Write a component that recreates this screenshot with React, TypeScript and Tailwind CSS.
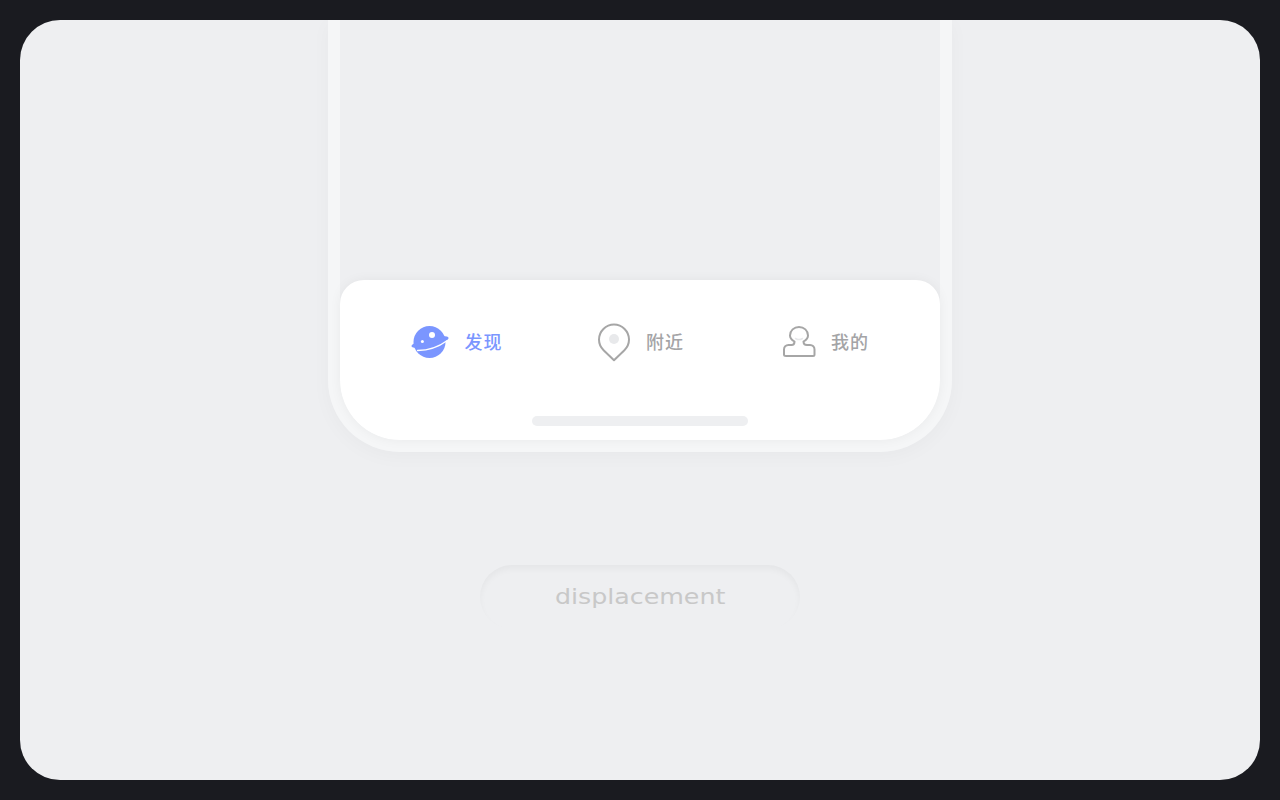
function PlanetIcon() {
  return (
    <svg width="40" height="40" viewBox="0 0 40 40" aria-hidden>
      <circle cx="19.500" cy="20" r="16" fill="#7b96ff" />
      <ellipse cx="20" cy="20" rx="19" ry="4.200" transform="rotate(-13 20 20)" fill="#7b96ff" />
      <path d="M7.500 28.500C17 28.300 28 25.500 36.500 19" fill="none" stroke="#fff" strokeWidth="1.300" strokeLinecap="round" />
      <circle cx="22" cy="13" r="3" fill="#fff" />
      <circle cx="12.400" cy="19.400" r="1.500" fill="#fff" />
    </svg>
  )
}

function PinIcon() {
  return (
    <svg width="36" height="42" viewBox="0 0 36 42" aria-hidden>
      <path
        d="M18 39.200 7.600 29.200C4.600 26.400 3 22.800 3 18.600 3 10.400 9.800 3.600 18 3.600s15 6.800 15 15c0 4.200-1.600 7.800-4.600 10.600z"
        fill="none"
        stroke="#a6a6a6"
        strokeWidth="2"
        strokeLinejoin="round"
      />
      <circle cx="18" cy="18" r="5" fill="#e8e9eb" />
    </svg>
  )
}

function PersonIcon() {
  return (
    <svg width="36" height="36" viewBox="0 0 36 36" aria-hidden>
      <path
        d="M13.500 17.500C10.800 16 9 14 9 11.500 9 6.500 13 3 18 3s9 3.500 9 8.500c0 2.500-1.800 4.500-4.500 6 0 1.800 1 3.500 3.500 3.500h3c2.600 0 4.500 2 4.500 4.500v5c0 1-.8 1.500-1.500 1.500h-27C3.800 32 3 31.500 3 30.500v-5C3 23 4.900 21 7.500 21h3c2.500 0 3-1.700 3-3.500z"
        fill="none"
        stroke="#a6a6a6"
        strokeWidth="2"
        strokeLinejoin="round"
      />
      <path d="M14.500 14.500c2 1.200 5 1.200 7 0" fill="none" stroke="#e8e9eb" strokeWidth="1.500" strokeLinecap="round" />
    </svg>
  )
}

const labelClass =
  "pb-[2px] text-[18px] leading-6 font-medium tracking-[1px] font-['Noto_Sans_CJK_SC','Noto_Sans',sans-serif]"

export default function App() {
  return (
    <div className="h-screen w-full overflow-hidden bg-[#1a1b20] p-5">
      <div className="flex h-full flex-col items-center overflow-hidden rounded-[40px] bg-[#eeeff1]">
        <div className="flex h-[432px] w-[624px] shrink-0 flex-col justify-end rounded-b-[72px] border-x-[12px] border-b-[12px] border-[#f5f6f7] shadow-[0_4px_20px_rgba(0,0,0,0.03)]">
          <div className="w-full rounded-t-[24px] rounded-b-[60px] bg-white shadow-[0_0_12px_rgba(0,0,0,0.05)]">
            <div className="grid h-[124px] grid-cols-3 items-center px-6">
              <div className="flex items-center justify-center gap-[15px]">
                <PlanetIcon />
                <span className={`${labelClass} text-[#7b96ff]`}>发现</span>
              </div>
              <div className="flex items-center justify-center gap-[14px]">
                <PinIcon />
                <span className={`${labelClass} text-[#a4a4a6]`}>附近</span>
              </div>
              <div className="ml-[2px] flex items-center justify-center gap-[14px]">
                <PersonIcon />
                <span className={`${labelClass} text-[#a4a4a6]`}>我的</span>
              </div>
            </div>
            <div className="mx-auto mt-3 mb-[14px] h-[10px] w-[216px] rounded-full bg-[#eeeff1]" />
          </div>
        </div>
        <div className="mt-[113px] flex h-[64px] w-[320px] shrink-0 items-start justify-center rounded-[36px] pt-[20px] shadow-[inset_0_4px_6px_rgba(0,0,0,0.04)]">
          <span className="origin-center scale-x-[1.15] font-['DejaVu_Sans',sans-serif] text-[22px] leading-6 font-normal text-[#c8c8c8]">
            displacement
          </span>
        </div>
      </div>
    </div>
  )
}
